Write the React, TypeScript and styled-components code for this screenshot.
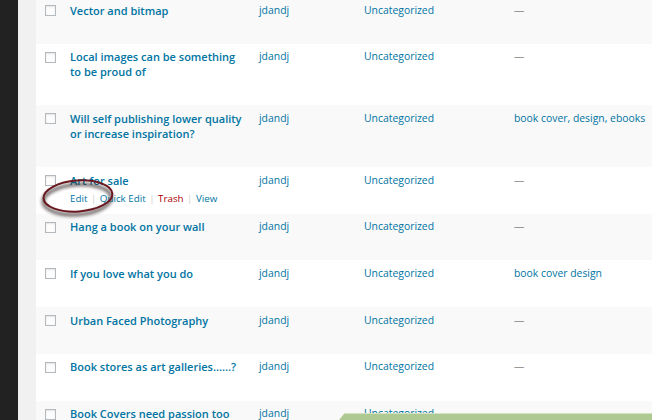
import React from 'react';
import styled, { createGlobalStyle } from 'styled-components';

const GlobalStyle = createGlobalStyle`
    html, body {
        margin: 0;
        padding: 0;
        background: #fff;
    }
    body {
        font-family: "Open Sans", "Liberation Sans", sans-serif;
    }
`;

const Page = styled.div`
    position: relative;
    display: flex;
    width: 652px;
    height: 420px;
    overflow: hidden;
`;

const AdminMenu = styled.div`
    width: 18px;
    flex-shrink: 0;
    background: #222;
`;

const Gutter = styled.div`
    width: 18px;
    flex-shrink: 0;
    background: #f1f1f1;
`;

const List = styled.div`
    flex: 1;
    margin-top: -3px;
`;

const Row = styled.div<{ $alt?: boolean }>`
    display: grid;
    grid-template-columns: 34px 189px 105px 150px 1fr;
    padding: 5.5px 0 5.7px;
    background: ${p => (p.$alt ? '#f9f9f9' : '#fff')};
    font-size: 10.4px;
    line-height: 15px;
    color: #0074a2;
    white-space: nowrap;
`;

const CheckCell = styled.div`
    padding: 2.5px 0 0 9px;
`;

const Check = styled.span`
    display: block;
    width: 9px;
    height: 9px;
    border: 1px solid #b4b9be;
    background: #fdfdfd;
    box-shadow: inset 0 1px 2px rgba(0, 0, 0, 0.1);
`;

const TitleCell = styled.div`
    padding-right: 14px;
`;

const Title = styled.div`
    font-size: 11px;
    font-weight: 600;
`;

const Actions = styled.div<{ $visible?: boolean }>`
    display: flex;
    margin-top: 2.5px;
    height: 18px;
    line-height: 18px;
    font-size: 9.8px;
    visibility: ${p => (p.$visible ? 'visible' : 'hidden')};
`;

const Action = styled.span<{ $danger?: boolean }>`
    color: ${p => (p.$danger ? '#a00' : '#0074a2')};
`;

const Sep = styled.span`
    color: #ccc;
    padding: 0 3.5px;
`;

const Muted = styled.span`
    color: #999;
`;

const Annotation = styled.svg`
    position: absolute;
    left: 0;
    top: 0;
    pointer-events: none;
`;

const Banner = styled.div`
    position: absolute;
    left: 336px;
    right: -10px;
    bottom: -4px;
    height: 10px;
    background: #afc992;
    transform: skewX(-38deg);
    transform-origin: bottom left;
    border-top: 1px solid #d3e3c2;
`;

type Post = {
    title: string[];
    tags: string;
    actions?: boolean;
};

const posts: Post[] = [
    { title: ['Vector and bitmap'], tags: '' },
    { title: ['Local images can be something', 'to be proud of'], tags: '' },
    { title: ['Will self publishing lower quality', 'or increase inspiration?'], tags: 'book cover, design, ebooks' },
    { title: ['Art for sale'], tags: '', actions: true },
    { title: ['Hang a book on your wall'], tags: '' },
    { title: ['If you love what you do'], tags: 'book cover design' },
    { title: ['Urban Faced Photography'], tags: '' },
    { title: ['Book stores as art galleries......?'], tags: '' },
    { title: ['Book Covers need passion too'], tags: '' },
];

const App = () => (
    <>
        <GlobalStyle/>
        <Page>
            <AdminMenu/>
            <Gutter/>
            <List>
                {posts.map((post, i) => (
                    <Row key={i} $alt={i % 2 === 0}>
                        <CheckCell><Check/></CheckCell>
                        <TitleCell>
                            <Title>
                                {post.title.map((line, j) => <div key={j}>{line}</div>)}
                            </Title>
                            <Actions $visible={post.actions}>
                                <Action>Edit</Action><Sep>|</Sep>
                                <Action>Quick Edit</Action><Sep>|</Sep>
                                <Action $danger>Trash</Action><Sep>|</Sep>
                                <Action>View</Action>
                            </Actions>
                        </TitleCell>
                        <div>jdandj</div>
                        <div>Uncategorized</div>
                        <div>{post.tags || <Muted>—</Muted>}</div>
                    </Row>
                ))}
            </List>
            <Annotation width="652" height="420" viewBox="0 0 652 420">
                <defs>
                    <filter id="shade" x="-30%" y="-40%" width="160%" height="200%">
                        <feGaussianBlur stdDeviation="1.8"/>
                    </filter>
                </defs>
                <g transform="rotate(-4 78 197)">
                    <ellipse cx="77" cy="199.5" rx="34" ry="15" fill="none" stroke="rgba(50,35,35,0.6)"
                             strokeWidth="4" filter="url(#shade)"/>
                    <ellipse cx="78" cy="196" rx="34.5" ry="15.5" fill="none" stroke="#6a1820" strokeWidth="2"/>
                </g>
            </Annotation>
            <Banner/>
        </Page>
    </>
);

export default App;
